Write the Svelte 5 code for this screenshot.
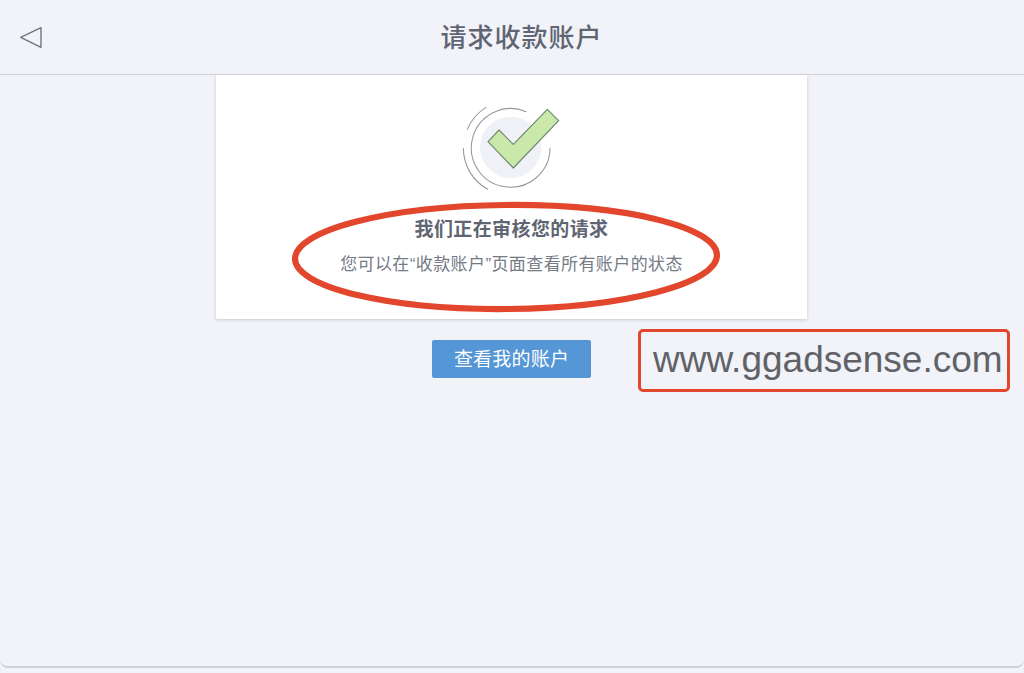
<script>
  const title = '请求收款账户';
</script>

<div class="screen">
  <header class="bar">
    <svg class="back" viewBox="0 0 24 24" width="24" height="24" aria-hidden="true">
      <path d="M1.7 12.3 L22 2.7 V22.3 Z" fill="none" stroke="#70747c" stroke-width="1.4" stroke-linejoin="round" />
    </svg>
    <h1>{title}</h1>
  </header>

  <main class="content">
    <section class="card">
      <svg class="check" viewBox="0 0 420 330" width="140" height="110" aria-hidden="true">
        <circle cx="212" cy="172" r="92" fill="#eff1f7" />
        <g fill="none" stroke="#96989c" stroke-width="3.2" stroke-linecap="round">
          <path d="M258 65 A118 118 0 1 0 330 175" />
          <path d="M138 52 A142 142 0 0 0 82 118" />
          <path d="M70 175 A142 142 0 0 0 143 298" />
        </g>
        <path d="M322 58 L356 92 L220 234 L144 155 L177 120 L220 163 Z" fill="#cbe8ab" stroke="#6f8a70" stroke-width="3.6" stroke-linejoin="round" />
      </svg>
      <h2>我们正在审核您的请求</h2>
      <p>您可以在“收款账户”页面查看所有账户的状态</p>
    </section>
    <button class="primary" type="button"><span>查看我的账户</span></button>
  </main>

  <svg class="ring" viewBox="0 0 1024 673" width="1024" height="673" aria-hidden="true">
    <ellipse cx="506" cy="257" rx="211" ry="52" transform="rotate(-0.5 506 257)" fill="none" stroke="#e2462c" stroke-width="6.2" />
  </svg>
  <div class="stamp">www.ggadsense.com</div>
</div>

<style>
  :global(body) {
    margin: 0;
    background: #f1f3f8;
  }
  .screen {
    position: relative;
    box-sizing: border-box;
    width: 1024px;
    height: 668px;
    overflow: hidden;
    background: #f1f3f8;
    border-bottom: 2px solid #cfd1d6;
    border-radius: 0 0 8px 8px;
    font-family: "Liberation Sans", "Noto Sans CJK SC", sans-serif;
  }
  .bar {
    box-sizing: border-box;
    display: flex;
    align-items: center;
    justify-content: center;
    position: relative;
    height: 75px;
    padding-left: 19px;
    border-bottom: 1px solid #cfd1d6;
  }
  .back {
    position: absolute;
    left: 19px;
    top: 25px;
  }
  h1 {
    margin: 4px 0 0;
    font-size: 26px;
    line-height: 1.2;
    font-weight: 500;
    letter-spacing: 1px;
    color: #5f6572;
  }
  .content {
    display: flex;
    flex-direction: column;
    align-items: center;
    padding-right: 1px;
  }
  .card {
    box-sizing: border-box;
    display: flex;
    flex-direction: column;
    align-items: center;
    width: 591px;
    height: 244px;
    padding-top: 15px;
    background: #fff;
    box-shadow: 0 1px 3px rgba(90, 95, 110, 0.28);
  }
  .check {
    display: block;
    margin-right: 3px;
    margin-bottom: 12px;
  }
  h2 {
    margin: 6px 0 0;
    font-size: 19px;
    line-height: 24px;
    font-weight: 700;
    letter-spacing: 0.4px;
    color: #5f6572;
  }
  p {
    margin: 11px 0 0;
    font-size: 17px;
    line-height: 24px;
    letter-spacing: 0.4px;
    color: #757a85;
  }
  .primary {
    display: flex;
    align-items: center;
    justify-content: center;
    width: 159px;
    height: 38px;
    margin-top: 21px;
    padding: 0 0 2px;
    border: 0;
    border-radius: 2px;
    background: #5596d6;
    color: #fff;
    font: 400 19px/24px "Noto Sans CJK SC", sans-serif;
    letter-spacing: 0.2px;
  }
  .ring {
    position: absolute;
    left: 0;
    top: 0;
    pointer-events: none;
  }
  .stamp {
    position: absolute;
    left: 638px;
    top: 329px;
    box-sizing: border-box;
    width: 372px;
    height: 63px;
    padding-left: 12px;
    border: 3px solid #e2462c;
    border-radius: 5px;
    font: 400 37px/56px "Liberation Sans", Arial, sans-serif;
    color: #616268;
    white-space: nowrap;
  }
</style>
